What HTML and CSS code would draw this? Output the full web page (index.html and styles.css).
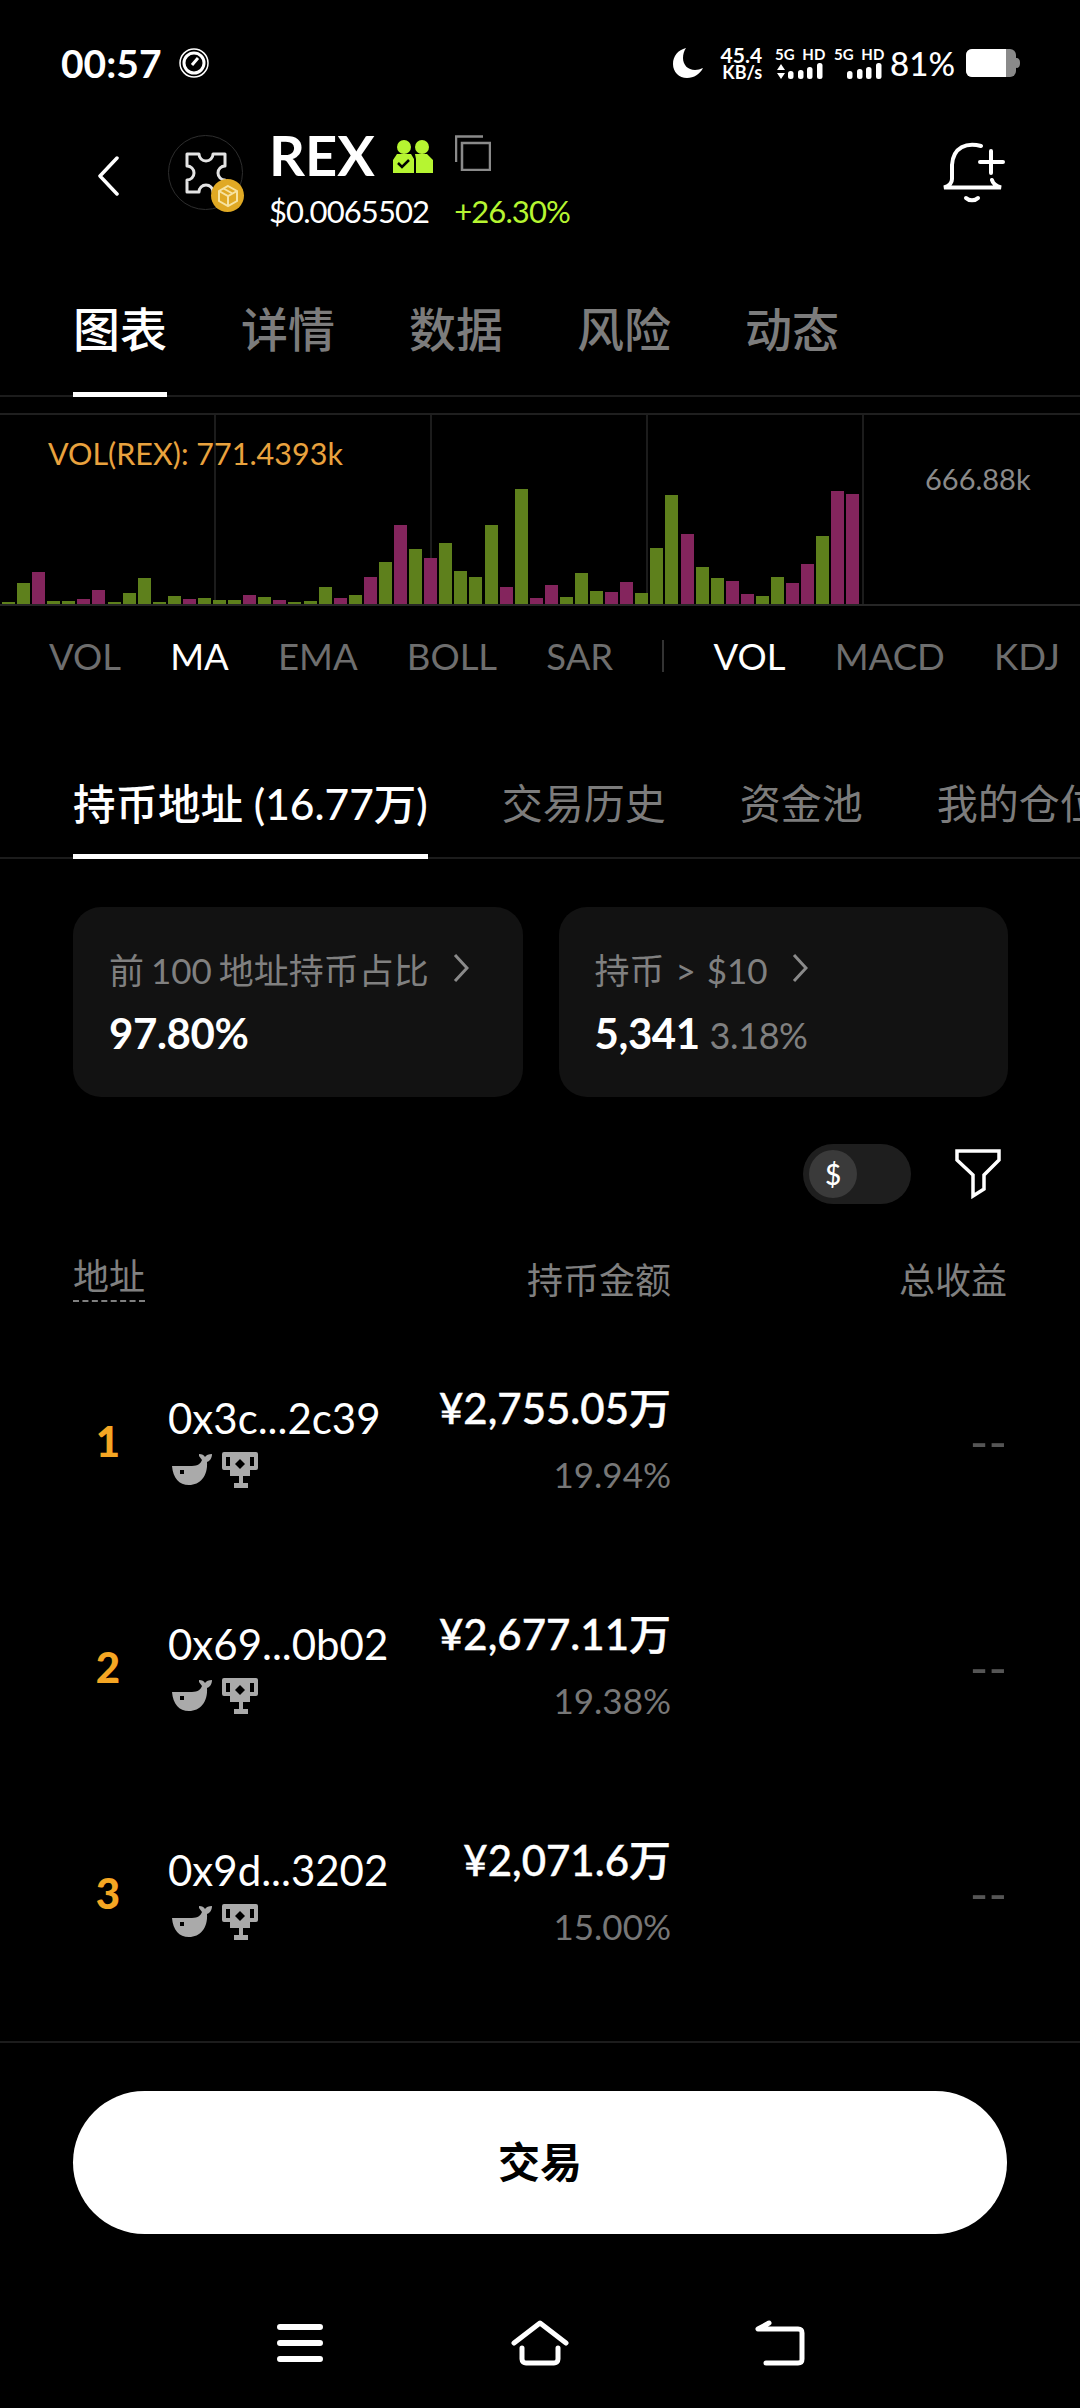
FILE: index.html
```html
<!DOCTYPE html>
<html lang="zh">
  <head>
    <meta charset="UTF-8" />
    <meta name="viewport" content="width=device-width, initial-scale=1.0" />
    <title>REX</title>
    <link rel="stylesheet" href="styles.css">
  </head>
  <body>
    <div class="status-bar">
      <div class="status-left">
        <span class="clock">00:57</span>
        <svg width="30" height="30" viewBox="0 0 30 30" fill="none" stroke="white">
          <circle cx="15" cy="15" r="14" stroke-width="1.5" />
          <circle cx="15" cy="15" r="10" stroke-width="3" />
          <path d="M13 17l6-7" stroke-width="3" />
        </svg>
      </div>
      <div class="status-right">
        <svg width="30" height="30" viewBox="0 0 30 30">
          <path d="M13 0C5 2 0 8 0 16c0 8 6 14 14 14 7 0 13-4 16-10-3 1-5 2-8 2-7 0-12-5-12-12 0-4 1-7 3-10z" fill="white" />
        </svg>
        <div class="speed"><span>45.4</span><small>KB/s</small></div>
        <div class="signal">
          <span>5G HD</span>
          <svg width="48" height="18" viewBox="0 0 48 18" fill="white">
            <path d="M6 2l4 6H2zM6 17l4-6H2z" />
            <rect x="13" y="9" width="5.500" height="8" rx="2.500" />
            <rect x="23" y="8" width="5.500" height="9" rx="2.500" />
            <rect x="32" y="5" width="5.500" height="12" rx="2.500" />
            <rect x="42" y="1" width="5.500" height="16" rx="2.500" />
          </svg>
        </div>
        <div class="signal">
          <span>5G HD</span>
          <svg width="48" height="18" viewBox="0 0 48 18" fill="white">
            <rect x="13" y="9" width="5.500" height="8" rx="2.500" />
            <rect x="23" y="7" width="5.500" height="10" rx="2.500" />
            <rect x="32" y="5" width="5.500" height="12" rx="2.500" />
            <rect x="42" y="1" width="5.500" height="16" rx="2.500" />
          </svg>
        </div>
        <span class="battery-text">81%</span>
        <svg width="54" height="28" viewBox="0 0 54 28">
          <rect x="0" y="0" width="50" height="28" rx="6" fill="#8a8a8a" />
          <path d="M6 0h34v28H6a6 6 0 0 1-6-6V6a6 6 0 0 1 6-6z" fill="white" />
          <path d="M50 9c3 0 4 2 4 5s-1 5-4 5z" fill="#8a8a8a" />
        </svg>
      </div>
    </div>

    <div class="token-header">
      <svg class="back" width="22" height="40" viewBox="0 0 22 40" fill="none">
        <path d="M20 2L3 20l17 18" stroke="white" stroke-width="3.5" stroke-linecap="round" stroke-linejoin="round" />
      </svg>
      <div class="logo">
        <svg width="44" height="44" viewBox="0 0 44 44" fill="none">
          <path d="M3 3H15a7 7 0 0 0 14 0H41V15a7 7 0 0 0 0 14V41H29a7 7 0 0 0-14 0H3V29a7 7 0 0 0 0-14Z" stroke="#e4e4e4" stroke-width="3" stroke-linejoin="round" />
        </svg>
        <div class="chain-badge">
          <svg width="24" height="24" viewBox="0 0 24 24" fill="none" stroke="#f7e3a0" stroke-width="2">
            <path d="M12 2l9 5v10l-9 5-9-5V7z" />
            <path d="M3 7l9 5 9-5M12 12v10M7.5 4.5l9 5" />
          </svg>
        </div>
      </div>
      <div class="token-info">
        <div class="token-name-row">
          <span class="token-name">REX</span>
          <svg class="group-icon" width="40" height="33" viewBox="0 0 40 33">
            <circle cx="11" cy="7" r="7" fill="#b6f531" />
            <circle cx="29" cy="7" r="7" fill="#b6f531" />
            <path d="M4 14h14l3 5v14H0V20z" fill="#b6f531" />
            <path d="M22 14h12l6 6v13H23V19z" fill="#b6f531" />
            <path d="M5 23l4 4 7-7" fill="none" stroke="#000" stroke-width="2.5" />
          </svg>
          <svg class="copy-icon" width="36" height="36" viewBox="0 0 36 36" fill="none" stroke="#8a8a8a" stroke-width="2.5">
            <path d="M1 27V1.5h27" />
            <rect x="7" y="8" width="28" height="27" />
          </svg>
        </div>
        <div class="price-row">
          <span class="price">$0.0065502</span>
          <span class="change">+26.30%</span>
        </div>
      </div>
      <svg class="bell" width="64" height="64" viewBox="0 0 64 64" fill="none" stroke="white" stroke-width="4" stroke-linecap="round">
        <path d="M40 5C26 1 12 6 11 24V38C11 42 8 45 3 46.500H60C55 45 52 43 51 39" />
        <path d="M25 57C28 60 34 60 37 57" />
        <path d="M39 21H62M50 10V32" />
      </svg>
    </div>

    <div class="main-tabs">
      <div class="main-tab active">图表</div>
      <div class="main-tab">详情</div>
      <div class="main-tab">数据</div>
      <div class="main-tab">风险</div>
      <div class="main-tab">动态</div>
    </div>

    <div class="chart">
      <div class="grid-line"></div>
      <div class="grid-line"></div>
      <div class="grid-line"></div>
      <div class="grid-line"></div>
      <div class="vol-label">VOL(REX): 771.4393k</div>
      <div class="axis-label">666.88k</div>
      <div class="bars" id="bars"></div>
    </div>

    <div class="indicators">
      <span>VOL</span>
      <span class="on">MA</span>
      <span>EMA</span>
      <span>BOLL</span>
      <span>SAR</span>
      <i class="sep"></i>
      <span class="on">VOL</span>
      <span>MACD</span>
      <span>KDJ</span>
    </div>

    <div class="sub-tabs">
      <div class="sub-tab active">持币地址 (16.77万)</div>
      <div class="sub-tab">交易历史</div>
      <div class="sub-tab">资金池</div>
      <div class="sub-tab">我的仓位</div>
    </div>

    <div class="cards">
      <div class="card">
        <div class="card-label">前 100 地址持币占比
          <svg width="16" height="30" viewBox="0 0 16 30" fill="none"><path d="M2 2l12 13L2 28" stroke="#8a8a8a" stroke-width="3" /></svg>
        </div>
        <div class="card-value">97.80%</div>
      </div>
      <div class="card">
        <div class="card-label wide">持币 &gt; $10
          <svg width="16" height="30" viewBox="0 0 16 30" fill="none"><path d="M2 2l12 13L2 28" stroke="#8a8a8a" stroke-width="3" /></svg>
        </div>
        <div class="card-value">5,341 <small>3.18%</small></div>
      </div>
    </div>

    <div class="tools">
      <div class="toggle">
        <div class="knob">$</div>
      </div>
      <svg width="46" height="50" viewBox="0 0 46 50" fill="none">
        <path d="M2 2H44V11L29 26V40L18 47V26L2 11Z" stroke="white" stroke-width="3.500" />
      </svg>
    </div>

    <div class="table-head">
      <span class="dashed">地址</span>
      <span class="head-amount">持币金额</span>
      <span class="head-pnl">总收益</span>
    </div>

    <div class="row">
      <div class="rank">1</div>
      <div class="addr-cell">
        <div class="addr">0x3c...2c39</div>
        <div class="badges" data-badges></div>
      </div>
      <div class="amount">
        <div>¥2,755.05万</div>
        <small>19.94%</small>
      </div>
      <div class="pnl">--</div>
    </div>
    <div class="row">
      <div class="rank">2</div>
      <div class="addr-cell">
        <div class="addr">0x69...0b02</div>
        <div class="badges" data-badges></div>
      </div>
      <div class="amount">
        <div>¥2,677.11万</div>
        <small>19.38%</small>
      </div>
      <div class="pnl">--</div>
    </div>
    <div class="row">
      <div class="rank">3</div>
      <div class="addr-cell">
        <div class="addr">0x9d...3202</div>
        <div class="badges" data-badges></div>
      </div>
      <div class="amount">
        <div>¥2,071.6万</div>
        <small>15.00%</small>
      </div>
      <div class="pnl">--</div>
    </div>

    <div class="trade-bar">
      <div class="trade-button">交易</div>
    </div>

    <div class="nav-bar">
      <svg width="46" height="38" viewBox="0 0 46 38" fill="none" stroke="white" stroke-width="6" stroke-linecap="round">
        <path d="M3 3h40M3 19h40M3 35h40" />
      </svg>
      <svg width="58" height="46" viewBox="0 0 58 46" fill="none" stroke="white" stroke-width="5" stroke-linecap="round" stroke-linejoin="round">
        <path d="M3 23L29 3l26 20" />
        <path d="M11 28v11c0 3 2 4 4 4h28c2 0 4-1 4-4V28" />
      </svg>
      <svg width="50" height="46" viewBox="0 0 50 46" fill="none" stroke="white" stroke-width="5" stroke-linecap="round" stroke-linejoin="round">
        <path d="M14 3L3 9h40c3 0 4 1 4 4v26c0 3-1 4-4 4H11" />
      </svg>
    </div>

    <template id="badgeIcons">
      <svg width="40" height="31" viewBox="0 0 40 31">
        <path d="M0 12H20C26 12 29 9 30 6L27 2V0C30 0 32 1 33 3 34 1 37 0 40 0 40 4 38 7 35 8 36 22 28 31 17 31 7 31 1 24 0 12Z" fill="#aaa" />
        <rect x="8" y="16" width="4" height="4" fill="#000" />
      </svg>
      <svg width="36" height="36" viewBox="0 0 36 36">
        <path d="M2 0h32a2 2 0 0 1 2 2v14a2 2 0 0 1-2 2h-6v6h-7v7h5v5H12v-5h5v-7h-9v-6H2a2 2 0 0 1-2-2V2a2 2 0 0 1 2-2z" fill="#aaa" />
        <rect x="4" y="5" width="4" height="9" fill="#000" />
        <rect x="28" y="5" width="4" height="9" fill="#000" />
        <path d="M18 7l5 5-5 5-5-5z" fill="#000" />
      </svg>
    </template>

    <script>
      // [height, is purple]
      const volumes = [
        [2,0],[21,0],[32,1],[3,0],[3,0],[5,1],[14,1],[2,0],[11,0],[26,0],[2,0],[8,0],
        [5,1],[6,0],[4,0],[4,0],[9,1],[7,0],[4,1],[2,0],[3,0],[17,0],[6,1],[9,0],
        [27,1],[42,0],[79,1],[55,0],[46,1],[61,0],[33,0],[27,0],[79,0],[17,1],[115,0],[6,1],
        [19,1],[7,0],[31,0],[13,0],[12,1],[22,1],[11,0],[56,0],[109,0],[70,1],[37,0],[26,0],
        [23,1],[10,1],[8,0],[27,0],[21,1],[40,1],[68,0],[113,1],[110,1]
      ];
      const barsEl = document.getElementById("bars");
      volumes.forEach(function (v) {
        const bar = document.createElement("div");
        bar.className = v[1] ? "bar purple" : "bar";
        bar.style.height = v[0] + "px";
        barsEl.appendChild(bar);
      });

      const tpl = document.getElementById("badgeIcons");
      document.querySelectorAll("[data-badges]").forEach(function (el) {
        el.innerHTML = tpl.innerHTML;
      });
    </script>
  </body>
</html>
```

FILE: styles.css
```css
* {
  box-sizing: border-box;
}

body {
  margin: 0;
  width: 1080px;
  height: 2408px;
  overflow: hidden;
  background-color: #000;
  color: #fff;
  font-family: "Lato", "Noto Sans CJK SC", sans-serif;
}

.status-bar {
  display: flex;
  justify-content: space-between;
  align-items: center;
  height: 126px;
  padding: 0 60px 0 61px;
}

.status-left,
.status-right {
  display: flex;
  align-items: center;
}

.status-left {
  gap: 17px;
}

.clock {
  font-size: 39px;
  font-weight: 700;
}

.status-right {
  gap: 11px;
}

.speed {
  display: flex;
  flex-direction: column;
  align-items: flex-end;
  width: 48px;
  margin-right: 2px;
  font-weight: 700;
  white-space: nowrap;
}

.speed span {
  font-size: 21px;
  line-height: 19px;
}

.speed small {
  font-size: 18px;
  line-height: 17px;
}

.signal {
  display: flex;
  flex-direction: column;
  width: 48px;
  font-size: 15px;
  font-weight: 700;
  line-height: 16px;
}

.signal span {
  white-space: nowrap;
  word-spacing: 4px;
}

.battery-text {
  margin-left: -3px;
  font-size: 33px;
  font-weight: 500;
}

.token-header {
  display: flex;
  align-items: flex-start;
  height: 92px;
  padding-left: 97px;
  margin-top: 4px;
}

.back {
  margin-top: 26px;
  margin-right: 49px;
}

.logo {
  position: relative;
  display: flex;
  align-items: center;
  justify-content: center;
  width: 75px;
  height: 75px;
  margin-top: 5px;
  border: 1.500px solid #2e2e2e;
  border-radius: 50%;
}

.chain-badge {
  position: absolute;
  right: -2px;
  bottom: -3px;
  display: flex;
  align-items: center;
  justify-content: center;
  width: 33px;
  height: 33px;
  border-radius: 50%;
  background-color: #e0a924;
}

.token-info {
  margin-left: 26px;
}

.token-name-row {
  display: flex;
  align-items: center;
  height: 50px;
}

.token-name {
  font-size: 56px;
  font-weight: 700;
  line-height: 50px;
}

.group-icon {
  margin-left: 18px;
  margin-top: 2px;
}

.copy-icon {
  margin-left: 22px;
  margin-top: -4px;
}

.price-row {
  display: flex;
  font-size: 31px;
  letter-spacing: -0.900px;
  line-height: 38px;
  margin-top: 12px;
}

.change {
  margin-left: 25px;
  color: #b6f531;
}

.bell {
  margin-left: auto;
  margin-right: 75px;
  margin-top: 11px;
}

.main-tabs {
  display: flex;
  gap: 74px;
  height: 175px;
  padding: 0 73px;
  padding-top: 73px;
  border-bottom: 2px solid #1c1c1c;
}

.main-tab {
  height: 102px;
  font-size: 47px;
  font-weight: 500;
  line-height: 68px;
  color: #7c7c7c;
}

.main-tab.active {
  color: #fff;
  border-bottom: 5px solid #fff;
}

.chart {
  position: relative;
  display: flex;
  height: 193px;
  margin-top: 16px;
  border-top: 2px solid #1f1f1f;
  border-bottom: 2px solid #262626;
}

.grid-line {
  width: 216px;
  border-right: 2px solid #1c1c1c;
}

.vol-label {
  position: absolute;
  left: 48px;
  top: 20px;
  font-size: 30.500px;
  line-height: 36px;
  color: #e9a23e;
}

.axis-label {
  position: absolute;
  left: 925px;
  top: 46px;
  font-size: 29px;
  line-height: 36px;
  color: #8a8a8a;
}

.bars {
  position: absolute;
  left: 2px;
  bottom: 0;
  display: flex;
  align-items: flex-end;
  gap: 2.080px;
}

.bar {
  width: 13px;
  background-color: #5e801c;
}

.bar.purple {
  background-color: #84255d;
}

.indicators {
  display: flex;
  align-items: center;
  gap: 49.200px;
  height: 100px;
  padding-left: 49px;
  font-size: 36.500px;
  color: #6e6e6e;
  white-space: nowrap;
}

.indicators .on {
  color: #fff;
}

.sep {
  width: 2px;
  height: 32px;
  background-color: #333;
}

.sub-tabs {
  display: flex;
  gap: 74px;
  height: 153px;
  padding-top: 68px;
  padding-left: 73px;
  border-bottom: 2px solid #1c1c1c;
  white-space: nowrap;
}

.sub-tab {
  height: 85px;
  font-size: 41px;
  line-height: 60px;
  color: #7c7c7c;
}

.sub-tab.active {
  font-size: 42.500px;
  font-weight: 500;
  color: #fff;
  border-bottom: 5px solid #fff;
}

.cards {
  display: flex;
  gap: 36px;
  padding: 48px 72px 0 73px;
}

.card {
  width: 450px;
  height: 190px;
  padding: 39px 36px;
  border-radius: 28px;
  background-color: #121212;
}

.card-label {
  display: flex;
  align-items: center;
  gap: 24px;
  height: 44px;
  font-size: 35px;
  word-spacing: -2px;
  color: #808080;
  white-space: nowrap;
}

.card-label.wide {
  word-spacing: 2px;
}

.card-value {
  margin-top: 18px;
  font-size: 42px;
  font-weight: 700;
  letter-spacing: -0.400px;
  line-height: 50px;
}

.card-value small {
  font-size: 36px;
  font-weight: 400;
  color: #808080;
}

.tools {
  display: flex;
  justify-content: flex-end;
  align-items: center;
  gap: 44px;
  height: 60px;
  margin-top: 47px;
  padding-right: 79px;
}

.toggle {
  display: flex;
  align-items: center;
  width: 108px;
  height: 60px;
  padding-left: 6px;
  border-radius: 30px;
  background-color: #1e1e1e;
}

.knob {
  width: 48px;
  height: 48px;
  border-radius: 50%;
  background-color: #3a3a3a;
  font-size: 28px;
  font-weight: 500;
  line-height: 48px;
  text-align: center;
}

.table-head {
  display: grid;
  grid-template-columns: 355px 243px 336px;
  align-items: center;
  height: 52px;
  margin-top: 48px;
  margin-bottom: 24px;
  padding-left: 73px;
  font-size: 36px;
  color: #808080;
}

.dashed {
  justify-self: start;
  padding-bottom: 2px;
  border-bottom: 2px dashed #808080;
  line-height: 44px;
}

.head-amount,
.head-pnl {
  text-align: right;
}

.row {
  display: grid;
  grid-template-columns: 95px 260px 243px 336px;
  align-items: center;
  height: 226px;
  padding-left: 73px;
}

.rank {
  width: 70px;
  font-size: 42px;
  font-weight: 900;
  color: #f5a623;
  text-align: center;
}

.addr-cell {
  padding-bottom: 2px;
}

.addr {
  font-size: 42px;
  line-height: 50px;
  white-space: nowrap;
}

.badges {
  display: flex;
  align-items: center;
  gap: 10px;
  margin-top: 9px;
  margin-left: 4px;
}

.amount {
  font-size: 42px;
  font-weight: 500;
  line-height: 52px;
  text-align: right;
  white-space: nowrap;
  -webkit-text-stroke: 0.400px #fff;
}

.amount small {
  display: block;
  margin-top: 14px;
  font-size: 35px;
  font-weight: 400;
  color: #777;
  -webkit-text-stroke: 0;
}

.pnl {
  font-size: 50px;
  line-height: 50px;
  color: #555;
  text-align: right;
}

.trade-bar {
  height: 192px;
  margin-top: 35px;
  padding: 48px 73px 0;
  border-top: 2px solid #1c1c1c;
}

.trade-button {
  height: 143px;
  border-radius: 72px;
  background-color: #fff;
  color: #000;
  font-size: 42px;
  font-weight: 700;
  line-height: 143px;
  text-align: center;
}

.nav-bar {
  display: flex;
  align-items: center;
  height: 46px;
  margin-top: 87px;
  padding-left: 277px;
}

.nav-bar svg:nth-child(2) {
  margin: 0 186px 0 188px;
}
```
